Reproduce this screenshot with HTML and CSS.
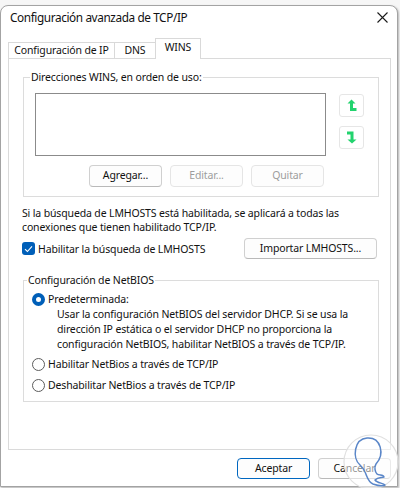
FILE: index.html
```html
<!DOCTYPE html>
<html lang="es">
<head>
<meta charset="utf-8">
<title>Configuración avanzada de TCP/IP</title>
<link rel="stylesheet" href="styles.css">
</head>
<body>
<div class="window">
  <div class="titlebar">
    <span class="title">Configuración avanzada de TCP/IP</span>
    <svg class="close" width="11" height="11" viewBox="0 0 11 11"><path d="M0.5 0.5L10.5 10.5M10.5 0.5L0.5 10.5" stroke="#1a1a1a" stroke-width="1.1" fill="none"/></svg>
  </div>
  <div class="tabs">
    <div class="tab tab-ip">Configuración de IP</div>
    <div class="tab tab-dns">DNS</div>
    <div class="tab tab-wins active">WINS</div>
  </div>
  <div class="panel">
    <fieldset class="group wins">
      <legend>Direcciones WINS, en orden de uso:</legend>
      <div class="list-row">
        <div class="listbox"></div>
        <div class="arrows">
          <div class="arrow-btn">
            <svg width="10" height="13" viewBox="0 0 10 13"><path d="M0.5 4.5L4.5 0.5L8.5 4.5Z" fill="#22d36e"/><path d="M4.5 3V10.5H9.5" stroke="#22d36e" stroke-width="3" fill="none"/></svg>
          </div>
          <div class="arrow-btn">
            <svg width="10" height="13" viewBox="0 0 10 13"><path d="M0 2H5V10" stroke="#22d36e" stroke-width="3" fill="none"/><path d="M0.5 8.5L5 12.5L9.5 8.5Z" fill="#22d36e"/></svg>
          </div>
        </div>
      </div>
      <div class="btn-row">
        <div class="btn">Agregar...</div>
        <div class="btn disabled">Editar...</div>
        <div class="btn disabled">Quitar</div>
      </div>
    </fieldset>
    <p class="info">Si la búsqueda de LMHOSTS está habilitada, se aplicará a todas las<br>conexiones que tienen habilitado TCP/IP.</p>
    <div class="check-row">
      <div class="check">
        <span class="checkbox"><svg width="9" height="8" viewBox="0 0 9 8"><path d="M1 4.2L3.4 6.5L8 1.3" stroke="#fff" stroke-width="1.1" fill="none"/></svg></span>
        <span>Habilitar la búsqueda de LMHOSTS</span>
      </div>
      <div class="btn import">Importar LMHOSTS...</div>
    </div>
    <fieldset class="group netbios">
      <legend>Configuración de NetBIOS</legend>
      <div class="radio-row first"><span class="radio checked"></span><span>Predeterminada:</span></div>
      <p class="desc">Usar la configuración NetBIOS del servidor DHCP. Si se usa la<br>dirección IP estática o el servidor DHCP no proporciona la<br>configuración NetBIOS, habilitar NetBIOS a través de TCP/IP.</p>
      <div class="radio-row second"><span class="radio"></span><span>Habilitar NetBios a través de TCP/IP</span></div>
      <div class="radio-row third"><span class="radio"></span><span>Deshabilitar NetBios a través de TCP/IP</span></div>
    </fieldset>
  </div>
  <div class="footer">
    <div class="btn primary">Aceptar</div>
    <div class="btn">Cancelar</div>
  </div>
  <svg class="watermark" width="56" height="58" viewBox="0 0 56 58">
    <circle cx="28" cy="28" r="27" fill="rgba(255,255,255,0.55)" stroke="#e0e0e0" stroke-width="1.2"/>
    <path d="M17 31C9 24 11 5 24 4C38 3 42 20 33 30C31 33 32 38 34 40C36 42 40 40 41 43C38 44 35 43 32 46C34 49 40 49 42 51C38 53 33 51 30 50C25 48 24 42 22 38C21 35 19 33 17 31Z" fill="none" stroke="#5a86c8" stroke-width="1.5" stroke-linejoin="round"/>
  </svg>
</div>
</body>
</html>
```
FILE: styles.css
```css
* { box-sizing: border-box; }
html, body { margin: 0; padding: 0; }
body {
  background: #f6f6f6;
  font-family: "Noto Sans", "Open Sans", sans-serif;
  font-size: 10.5px;
  letter-spacing: -0.14px;
  color: #1b1b1b;
  padding-top: 5px;
  width: 400px;
  height: 488px;
  overflow: hidden;
  white-space: nowrap;
}
.window {
  position: relative;
  width: 398px;
  height: 482px;
  background: #fff;
  border: 1px solid #a3a3a3;
  border-radius: 8px 8px 0 0;
  box-shadow: 1px 1px 2px rgba(0,0,0,0.25);
}
.titlebar {
  display: flex;
  align-items: flex-start;
  height: 32px;
  padding: 2px 9px 0 9px;
}
.title {
  font-size: 11.8px;
  letter-spacing: -0.4px;
  line-height: 18px;
  color: #111;
}
.close {
  margin-left: auto;
  margin-top: 4px;
}
.tabs {
  display: flex;
  align-items: flex-end;
  height: 20px;
  margin-left: 7px;
}
.tab {
  height: 16px;
  border: 1px solid #d9d9d9;
  border-bottom: none;
  background: #fff;
  line-height: 15px;
  text-align: center;
  color: #111;
}
.tab + .tab { margin-left: -1px; }
.tab-ip { width: 107px; }
.tab-dns { width: 42px; }
.tab-wins { width: 46px; }
.tab.active {
  position: relative;
  z-index: 1;
  height: 21px;
  margin-bottom: -1px;
  line-height: 17px;
}
.panel {
  height: 392px;
  margin: 0 6px 0 7px;
  border: 1px solid #dadada;
  padding: 0 13px;
  background: #fff;
}
.group {
  margin: 0 -2px 0 1px;
  border: 1px solid #dcdcdc;
  padding: 0;
  min-width: 0;
}
.group legend {
  padding: 0 1px;
  margin-left: -5px;
  line-height: 16px;
  color: #111;
}
.wins {
  margin-top: 10px;
  padding: 8px 11px 9px 11px;
}
.list-row {
  display: flex;
  align-items: flex-start;
}
.listbox {
  width: 291px;
  height: 63px;
  border: 1px solid #8b8b8b;
  background: #fff;
}
.arrows {
  display: flex;
  flex-direction: column;
  gap: 9px;
  margin-left: 13px;
  margin-top: 1px;
}
.arrow-btn {
  width: 25px;
  height: 23px;
  border: 1px solid #e6e6e6;
  border-radius: 3px;
  display: flex;
  align-items: center;
  justify-content: center;
}
.btn-row {
  display: flex;
  gap: 8px;
  margin-top: 9px;
  padding-left: 54px;
}
.btn {
  width: 73px;
  height: 22px;
  border: 1px solid #d0d0d0;
  border-bottom-color: #b9b9b9;
  border-radius: 4px;
  background: #fdfdfd;
  text-align: center;
  line-height: 19px;
  color: #111;
}
.btn.disabled {
  color: #9d9d9d;
  border-color: #e5e5e5;
}
.info {
  margin: 9px 0 0 0;
  line-height: 14px;
  color: #111;
}
.check-row {
  display: flex;
  align-items: center;
  justify-content: space-between;
  margin-top: 4px;
}
.check {
  display: flex;
  align-items: center;
  gap: 3px;
  color: #111;
}
.checkbox {
  width: 13px;
  height: 13px;
  border-radius: 3px;
  background: #005fb8;
  display: flex;
  align-items: center;
  justify-content: center;
}
.btn.import {
  width: 133px;
  height: 21px;
  line-height: 18px;
}
.netbios {
  margin-top: 13px;
  padding: 4px 8px 8px 8px;
}
.radio-row {
  display: flex;
  align-items: center;
  gap: 3px;
  height: 15px;
  line-height: 15px;
  color: #111;
}
.radio-row.second { margin-top: 5px; }
.radio-row.third { margin-top: 6px; }
.radio {
  width: 13px;
  height: 13px;
  border-radius: 50%;
  border: 1px solid #5c5c5c;
  background: #fff;
}
.radio.checked {
  border: 4px solid #005fb8;
  background: #fff;
}
.desc {
  margin: 0;
  padding-left: 25px;
  line-height: 15px;
  color: #111;
}
.footer {
  display: flex;
  justify-content: flex-end;
  gap: 8px;
  margin-top: 8px;
  padding-right: 6px;
}
.footer .btn { height: 21px; line-height: 18px; }
.btn.primary {
  border: 1px solid #0067c0;
}
.watermark {
  position: absolute;
  left: 342px;
  top: 428px;
}
```
